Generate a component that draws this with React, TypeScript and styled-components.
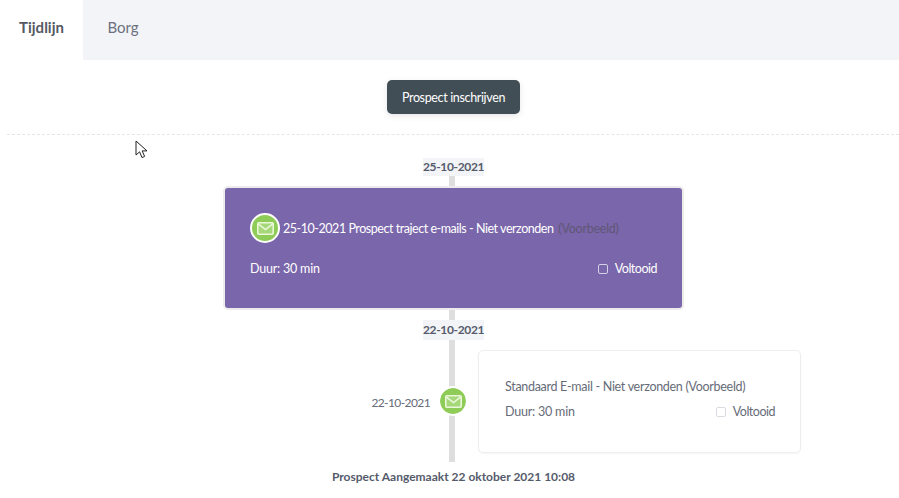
import styled, { createGlobalStyle } from 'styled-components';

const GlobalStyle = createGlobalStyle`
  html, body {
    margin: 0;
    padding: 0;
    background: #fff;
    font-family: 'Lato', 'Liberation Sans', sans-serif;
    font-size: 12.5px;
    color: #5c6170;
  }
`;

const EnvelopeIcon = () => (
  <svg width='17' height='13' viewBox='0 0 17 13' fill='none'>
    <rect x='0.8' y='0.8' width='15.4' height='11.4' rx='1' fill='#a6d87a' stroke='#eaf7da' strokeWidth='1.6' />
    <path d='M1.2 1.8 L8.5 7.6 L15.8 1.8' stroke='#eaf7da' strokeWidth='1.6' />
  </svg>
);

const App = () => {
  return (
    <Page>
      <GlobalStyle />
      <Tabs>
        <Tab $active>Tijdlijn</Tab>
        <Tab>Borg</Tab>
      </Tabs>
      <ActionBar>
        <EnrollButton>Prospect inschrijven</EnrollButton>
      </ActionBar>
      <Cursor width='14' height='20' viewBox='0 0 14 20'>
        <path
          d='M1 1 L1 15 L4.6 11.8 L7 17.6 L9.6 16.4 L7.2 10.9 L12 10.9 Z'
          fill='#fff'
          stroke='#222'
          strokeWidth='1'
          strokeLinejoin='round'
        />
      </Cursor>
      <Timeline>
        <Rail />
        <DateBadge>25-10-2021</DateBadge>
        <FeaturedCard>
          <CardTitle>
            <FeaturedIcon>
              <EnvelopeIcon />
            </FeaturedIcon>
            25-10-2021 Prospect traject e-mails - Niet verzonden&nbsp;<Muted>(Voorbeeld)</Muted>
          </CardTitle>
          <CardFooter $top={18}>
            <span>Duur: 30 min</span>
            <DoneLabel>
              <CheckBox $light />
              Voltooid
            </DoneLabel>
          </CardFooter>
        </FeaturedCard>
        <DateBadge $second>22-10-2021</DateBadge>
        <EventRow>
          <EventDate>22-10-2021</EventDate>
          <EventIcon>
            <EnvelopeIcon />
          </EventIcon>
          <EventCard>
            <EventTitle>Standaard E-mail - Niet verzonden (Voorbeeld)</EventTitle>
            <CardFooter $top={10}>
              <span>Duur: 30 min</span>
              <DoneLabel>
                <CheckBox />
                Voltooid
              </DoneLabel>
            </CardFooter>
          </EventCard>
        </EventRow>
        <CreatedText>Prospect Aangemaakt 22 oktober 2021 10:08</CreatedText>
      </Timeline>
    </Page>
  );
};

export default App;

const Page = styled.div`
  position: relative;
  width: 899px;
  height: 498px;
  overflow: hidden;
`;

const Tabs = styled.div`
  display: flex;
  height: 60px;
  background: #f2f4f8;
`;

const Tab = styled.div<{ $active?: boolean }>`
  display: flex;
  align-items: center;
  justify-content: center;
  width: ${(p) => (p.$active ? '83px' : '80px')};
  padding-bottom: 7px;
  box-sizing: border-box;
  font-size: 15px;
  font-weight: ${(p) => (p.$active ? 700 : 400)};
  color: ${(p) => (p.$active ? '#555963' : '#6b7180')};
  background: ${(p) => (p.$active ? '#fff' : 'transparent')};
`;

const ActionBar = styled.div`
  display: flex;
  justify-content: center;
  margin-left: 7px;
  padding: 20px 0 20px 1px;
  border-bottom: 1px dashed #e6e6e6;
`;

const EnrollButton = styled.button`
  width: 133px;
  height: 34px;
  padding: 0;
  border: 0;
  border-radius: 5px;
  background: #424e55;
  color: #fff;
  font-family: inherit;
  font-size: 12.5px;
  letter-spacing: -0.35px;
  box-shadow: 0 2px 6px rgba(0, 0, 0, 0.1);
`;

const Cursor = styled.svg`
  position: absolute;
  left: 135px;
  top: 140px;
`;

const Timeline = styled.div`
  position: relative;
  display: flex;
  flex-direction: column;
  align-items: center;
  margin-left: 8px;
  padding-top: 23px;
`;

const Rail = styled.div`
  position: absolute;
  top: 30px;
  left: calc(50% - 4.5px);
  width: 6px;
  height: 297px;
  background: #dedede;
`;

const DateBadge = styled.div<{ $second?: boolean }>`
  position: relative;
  width: 61px;
  height: ${(p) => (p.$second ? '20px' : '18px')};
  margin-top: ${(p) => (p.$second ? '10px' : '0')};
  line-height: ${(p) => (p.$second ? '20px' : '18px')};
  text-align: center;
  font-size: 12px;
  font-weight: 700;
  letter-spacing: -0.35px;
  color: #555b6b;
  background: #f2f4f8;
  white-space: nowrap;
`;

const FeaturedCard = styled.div`
  position: relative;
  box-sizing: border-box;
  width: 461px;
  height: 124px;
  margin-top: 10px;
  padding: 25px 25px 0;
  border: 2px solid #ececec;
  border-radius: 5px;
  background: #7a66aa;
  color: #fff;
`;

const CardTitle = styled.div`
  display: flex;
  align-items: center;
  height: 30px;
  letter-spacing: -0.46px;
  white-space: nowrap;
`;

const Muted = styled.span`
  margin-left: 2px;
  letter-spacing: -0.25px;
  color: #5f5676;
`;

const FeaturedIcon = styled.div`
  display: flex;
  align-items: center;
  justify-content: center;
  box-sizing: border-box;
  width: 30px;
  height: 30px;
  margin-right: 3px;
  border: 2px solid #fff;
  border-radius: 50%;
  background: #8fcc57;
`;

const CardFooter = styled.div<{ $top: number }>`
  display: flex;
  align-items: center;
  justify-content: space-between;
  margin-top: ${(p) => p.$top}px;
  letter-spacing: -0.2px;
`;

const DoneLabel = styled.label`
  display: flex;
  align-items: center;
  gap: 7px;
  letter-spacing: -0.5px;
`;

const CheckBox = styled.span<{ $light?: boolean }>`
  box-sizing: border-box;
  width: 10px;
  height: 10px;
  border: 1px solid ${(p) => (p.$light ? '#d5d0e6' : '#d8dbe2')};
  border-radius: 2px;
  background: ${(p) => (p.$light ? '#7a66aa' : '#fff')};
`;

const EventRow = styled.div`
  position: relative;
  display: grid;
  grid-template-columns: 421px 26px 1fr;
  align-items: center;
  column-gap: 11px;
  width: 100%;
  margin-top: 10px;
`;

const EventDate = styled.div`
  margin-right: -1px;
  padding-top: 2px;
  text-align: right;
  letter-spacing: -0.6px;
  font-size: 12px;
  color: #666b78;
`;

const EventIcon = styled.div`
  display: flex;
  align-items: center;
  justify-content: center;
  width: 26px;
  height: 26px;
  margin-bottom: 1px;
  border-radius: 50%;
  background: #8fcc57;
  outline: 2px solid #fff;
`;

const EventCard = styled.div`
  box-sizing: border-box;
  width: 323px;
  height: 103px;
  margin-left: 1px;
  padding: 28px 25px 0 26px;
  border: 1px solid #eeeeee;
  border-radius: 5px;
  background: #fff;
  box-shadow: 0 1px 2px rgba(0, 0, 0, 0.04);
  color: #666b78;
`;

const EventTitle = styled.div`
  letter-spacing: -0.3px;
  white-space: nowrap;
`;

const CreatedText = styled.div`
  position: relative;
  margin-top: 16px;
  font-size: 12px;
  font-weight: 700;
  color: #555b6b;
`;
